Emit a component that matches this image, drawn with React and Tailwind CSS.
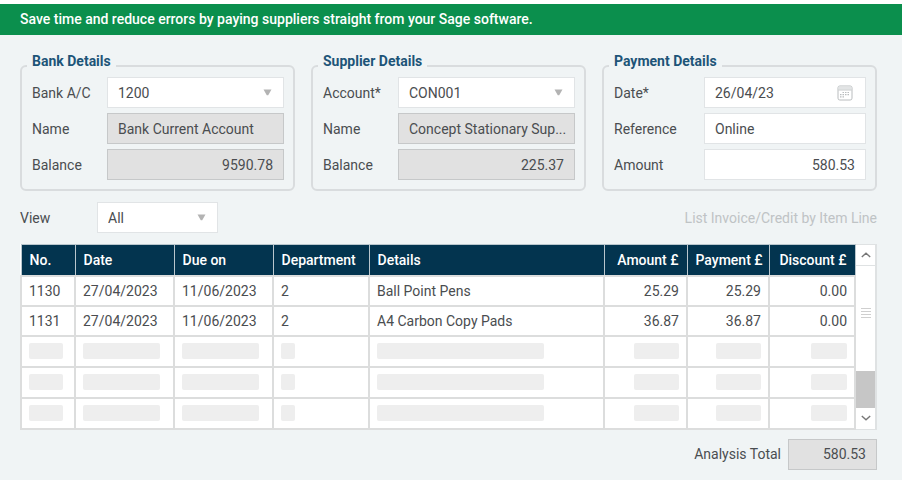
import clsx from "clsx"

const columns = [
  { title: "No.", width: "w-[54px]", bar: "w-[34px]" },
  { title: "Date", width: "w-[99px]", bar: "w-[77px]" },
  { title: "Due on", width: "w-[99px]", bar: "w-[77px]" },
  { title: "Department", width: "w-[96px]", bar: "w-[14px]" },
  { title: "Details", width: "", bar: "w-[167px]" },
  { title: "Amount £", width: "w-[83px]", bar: "w-[45px]", right: true },
  { title: "Payment £", width: "w-[82px]", bar: "w-[45px]", right: true },
  { title: "Discount £", width: "w-[86px]", bar: "w-[36px]", right: true }
]

const invoices = [
  ["1130", "27/04/2023", "11/06/2023", "2", "Ball Point Pens", "25.29", "25.29", "0.00"],
  ["1131", "27/04/2023", "11/06/2023", "2", "A4 Carbon Copy Pads", "36.87", "36.87", "0.00"]
]

const emptyRows = [1, 2, 3]

function Group({ title, wideLabels, children }) {
  return (
    <fieldset className="min-w-0 flex-1 rounded-md border-2 border-[#d9dcde] px-[5px] pb-[9px]">
      <legend className="px-[5px] pb-[10px] text-sm leading-3 font-bold text-[#1d5478]">{title}</legend>
      <div
        className={clsx(
          "grid items-center gap-y-[5px] pr-1 pl-[5px]",
          wideLabels ? "grid-cols-[90px_1fr]" : "grid-cols-[75px_1fr]"
        )}
      >
        {children}
      </div>
    </fieldset>
  )
}

function Field({ id, label, value, readOnly, right }) {
  return (
    <>
      <label htmlFor={id}>{label}</label>
      <input
        id={id}
        type="text"
        defaultValue={value}
        readOnly={readOnly}
        className={clsx(
          "h-[31px] w-full min-w-0 border pl-[10px] outline-none",
          readOnly ? "border-[#c6c8c9] bg-[#e1e1e1]" : "border-[#e1e4e6] bg-white",
          right ? "pr-[10px] text-right" : "pr-1"
        )}
      />
    </>
  )
}

function Select({ id, value }) {
  return (
    <div className="relative">
      <select
        id={id}
        defaultValue={value}
        className="h-[31px] w-full appearance-none border border-[#e1e4e6] bg-white px-[10px] outline-none"
      >
        <option>{value}</option>
      </select>
      <svg
        viewBox="0 0 9 7"
        className="pointer-events-none absolute top-3 right-3 h-[7px] w-[9px] fill-[#b3b3b3]"
      >
        <path d="M0.5 0.5h8L5.2 6.2H3.8z" />
      </svg>
    </div>
  )
}

function CalendarIcon() {
  return (
    <svg viewBox="0 0 16 16" className="h-4 w-4" fill="none" stroke="#b9bcbe">
      <rect x="1" y="1" width="14" height="14" rx="1.8" fill="#fff" />
      <path d="M1.5 3h13" stroke="#e2e4e5" strokeWidth="3" />
      <path d="M1.5 5h13" strokeWidth="0.8" />
      <path d="M5.500 7.500h7.500M3 9.700h10M3 11.900h5" strokeWidth="1.200" strokeDasharray="1.5 1" />
    </svg>
  )
}

function Chevron({ d }) {
  return (
    <svg viewBox="0 0 10 6" className="h-[6px] w-[10px]" fill="none" stroke="#777" strokeWidth="1.4">
      <path d={d} />
    </svg>
  )
}

function ScrollBar() {
  return (
    <div className="flex w-[21px] shrink-0 flex-col border-y border-r-2 border-[#dfe2e3] bg-white">
      <button
        type="button"
        aria-label="Scroll up"
        className="flex h-[21px] items-center justify-center border-b border-[#dfe2e3]"
      >
        <Chevron d="M0.8 5L5 1.2L9.2 5" />
      </button>
      <div className="flex flex-1 flex-col">
        <div className="flex flex-1 items-center justify-center pb-3">
          <svg viewBox="0 0 10 11" className="h-[11px] w-[10px]" stroke="#cfcfcf">
            <path d="M0 1.5h10M0 4.5h10M0 7.5h10M0 10.5h10" />
          </svg>
        </div>
        <div className="h-[37px] bg-[#c6c6c6]" />
      </div>
      <button type="button" aria-label="Scroll down" className="flex h-[21px] items-center justify-center">
        <Chevron d="M0.8 1L5 4.8L9.2 1" />
      </button>
    </div>
  )
}

function InvoiceTable() {
  return (
    <table className="w-full min-w-0 table-fixed border-collapse bg-white">
      <thead>
        <tr className="h-[31px] bg-[#03344f] text-white">
          {columns.map((col) => (
            <th
              key={col.title}
              className={clsx(
                "border border-[#b9c6cd] px-2 font-medium whitespace-nowrap",
                col.width,
                col.right ? "text-right" : "text-left"
              )}
            >
              {col.title}
            </th>
          ))}
        </tr>
      </thead>
      <tbody>
        {invoices.map((row) => (
          <tr key={row[0]} className="h-[30px]">
            {row.map((cell, i) => (
              <td
                key={columns[i].title}
                className={clsx("border-2 border-[#dcdddd] px-[7px]", columns[i].right && "text-right")}
              >
                {cell}
              </td>
            ))}
          </tr>
        ))}
        {emptyRows.map((n) => (
          <tr key={n} className="h-[31px]">
            {columns.map((col) => (
              <td key={col.title} className="border-2 border-[#dcdddd] px-[7px]">
                <div className={clsx("h-4 rounded-xs bg-[#eeeeee]", col.bar, col.right && "ml-auto")} />
              </td>
            ))}
          </tr>
        ))}
      </tbody>
    </table>
  )
}

export default function App() {
  return (
    <div className="min-h-screen bg-[#f0f4f5] font-[Roboto,sans-serif] text-sm text-[#4a4d50]">
      <header className="border-t-4 border-white bg-[#0b8f4d] px-5 py-[6px] leading-[19px] font-medium text-white">
        Save time and reduce errors by paying suppliers straight from your Sage software.
      </header>

      <main className="pt-5 pr-[25px] pb-[10px] pl-5">
        <form>
          <div className="flex gap-4">
            <Group title="Bank Details">
              <label htmlFor="bank">Bank A/C</label>
              <Select id="bank" value="1200" />
              <Field id="bank-name" label="Name" value="Bank Current Account" readOnly />
              <Field id="bank-balance" label="Balance" value="9590.78" readOnly right />
            </Group>

            <Group title="Supplier Details">
              <label htmlFor="supplier">Account*</label>
              <Select id="supplier" value="CON001" />
              <Field id="supplier-name" label="Name" value="Concept Stationary Sup..." readOnly />
              <Field id="supplier-balance" label="Balance" value="225.37" readOnly right />
            </Group>

            <Group title="Payment Details" wideLabels>
              <label htmlFor="date">Date*</label>
              <div className="flex h-[31px] items-center border border-[#e1e4e6] bg-white pr-3">
                <input
                  id="date"
                  type="text"
                  defaultValue="26/04/23"
                  className="w-full min-w-0 bg-transparent pl-[10px] outline-none"
                />
                <button type="button" aria-label="Choose date">
                  <CalendarIcon />
                </button>
              </div>
              <Field id="reference" label="Reference" value="Online" />
              <Field id="amount" label="Amount" value="580.53" right />
            </Group>
          </div>

          <div className="mt-[11px] flex items-center">
            <label htmlFor="view" className="w-[77px]">View</label>
            <div className="w-[121px]">
              <Select id="view" value="All" />
            </div>
            <button type="button" disabled className="ml-auto text-[#bfc3c5]">
              List Invoice/Credit by Item Line
            </button>
          </div>

          <div className="mt-[11px] flex">
            <InvoiceTable />
            <ScrollBar />
          </div>

          <div className="mt-[9px] flex items-center justify-end gap-[7px]">
            <label htmlFor="total">Analysis Total</label>
            <input
              id="total"
              type="text"
              readOnly
              defaultValue="580.53"
              className="h-[31px] w-[89px] border border-[#c6c8c9] bg-[#e1e1e1] px-[10px] text-right outline-none"
            />
          </div>
        </form>
      </main>
    </div>
  )
}
